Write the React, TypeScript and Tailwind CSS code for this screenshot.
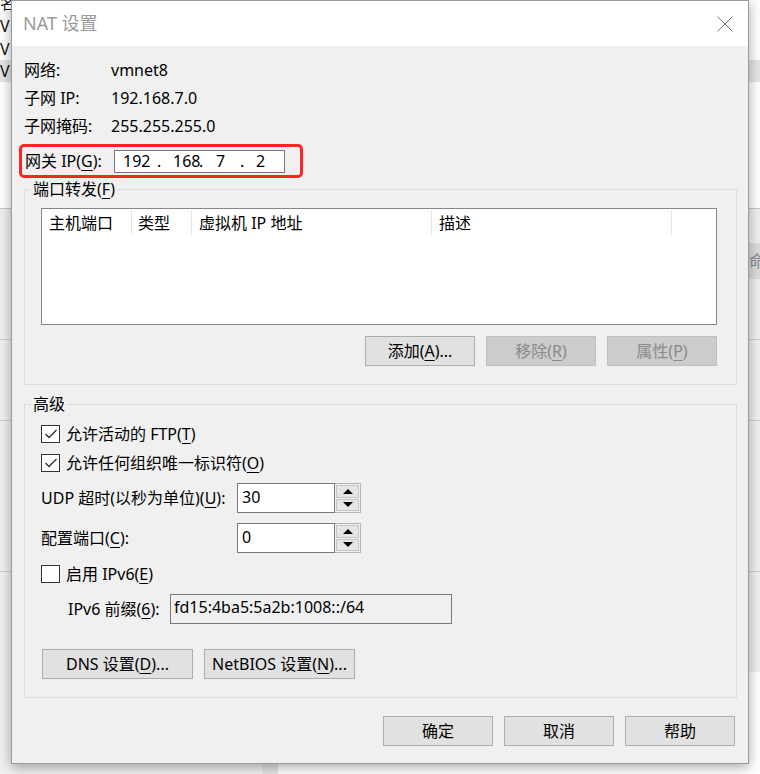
import type { ReactNode } from "react";

function K({ children }: { children: ReactNode }) {
  return <span className="underline decoration-1 underline-offset-[3px]">{children}</span>;
}

function Btn({ children, className = "", disabled }: { children: ReactNode; className?: string; disabled?: boolean }) {
  return (
    <div
      className={
        "flex h-[30px] items-center justify-center border text-[16px] " +
        (disabled ? "border-[#bfbfbf] bg-[#cccccc] text-[#8a8a8a] " : "border-[#adadad] bg-[#e1e1e1] text-black ") +
        className
      }
    >
      {children}
    </div>
  );
}

function Check({ checked, children }: { checked?: boolean; children: ReactNode }) {
  return (
    <div className="flex h-[20px] items-center">
      <div className="flex h-[18px] w-[19px] items-center justify-center border border-[#333] bg-white">
        {checked && (
          <svg width="14" height="14" viewBox="0 0 14 14">
            <polyline points="1.5,7 5,10.5 12.5,3" fill="none" stroke="#333" strokeWidth="1.4" />
          </svg>
        )}
      </div>
      <span className="ml-[6px]">{children}</span>
    </div>
  );
}

function Spin({ value }: { value: string }) {
  return (
    <div className="flex h-[30px]">
      <div className="h-[30px] w-[98px] border border-[#7a7a7a] bg-white px-[4px] pt-[2px] leading-[22px]">{value}</div>
      <div className="flex h-[30px] w-[26px] flex-col gap-[1px] border-y border-r border-[#b4b4b4] bg-[#f0f0f0] p-[1px]">
        <div className="flex flex-1 items-center justify-center border border-[#c6c6c6] bg-[#e5e5e5]">
          <div className="h-0 w-0 border-x-[5px] border-b-[5px] border-x-transparent border-b-black" />
        </div>
        <div className="flex flex-1 items-center justify-center border border-[#c6c6c6] bg-[#e5e5e5]">
          <div className="h-0 w-0 border-x-[5px] border-t-[5px] border-x-transparent border-t-black" />
        </div>
      </div>
    </div>
  );
}

function Group({ title, children, className = "" }: { title: ReactNode; children: ReactNode; className?: string }) {
  return (
    <fieldset className={"ml-[12px] w-[713px] border border-[#dcdcdc] " + className}>
      <legend className="-ml-[10px] px-[2px] text-[16px] leading-[22px]">{title}</legend>
      {children}
    </fieldset>
  );
}

export default function App() {
  return (
    <div className="relative h-[774px] w-[760px] overflow-hidden bg-white font-['Noto_Sans','Noto_Sans_CJK_SC',sans-serif] text-[16px] text-black">
      {/* window behind the dialog */}
      <div className="flex h-full flex-col">
        <div className="-mt-[8px] flex h-[22px] w-[11px] items-center overflow-hidden text-[#222]">名</div>
        <div className="flex h-[24px] items-center">
          <span className="w-[11px] overflow-hidden text-[#111]">V</span>
        </div>
        <div className="flex h-[22px] items-center">
          <span className="w-[11px] overflow-hidden text-[#111]">V</span>
        </div>
        <div className="flex h-[22px] items-center bg-[#e5e5e5]">
          <span className="w-[11px] overflow-hidden text-[#111]">V</span>
        </div>
        <div className="h-[126px] bg-white" />
        <div className="flex flex-1 flex-col border-t border-[#c8c8c8] bg-[#f0f0f0]">
          <div className="mt-[34px] ml-auto flex h-[36px] w-[11px] items-center overflow-hidden bg-[#dddddd] text-[#888]">命</div>
          <div className="mt-[60px] h-px bg-[#cfcfcf]" />
          <div className="mt-[80px] h-px bg-[#cfcfcf]" />
          <div className="mt-[150px] h-px bg-[#cfcfcf]" />
          <div className="mt-[100px] flex flex-1">
            <div className="w-[262px] bg-[#f0f0f0]" />
            <div className="w-[16px] bg-[#e4e4e4]" />
            <div className="flex-1 bg-white" />
          </div>
        </div>
      </div>

      {/* NAT dialog */}
      <div className="absolute left-[11px] top-0 flex h-[764px] w-[738px] flex-col border border-[#9a9a9a] bg-[#f0f0f0] shadow-[0_3px_12px_rgba(0,0,0,0.35)]">
        <div className="flex h-[45px] items-center justify-between bg-white pl-[11px] pr-[15px]">
          <span className="text-[18px] text-[#9c9c9c]">NAT 设置</span>
          <svg width="16" height="16" viewBox="0 0 16 16">
            <path d="M0.5 0.5 L15.5 15.5 M15.5 0.5 L0.5 15.5" stroke="#7a7a7a" strokeWidth="1" />
          </svg>
        </div>

        <div className="flex flex-col pt-[10px]">
          <div className="flex h-[28px] items-center pl-[12px]">
            <span className="w-[87px]">网络:</span>
            <span>vmnet8</span>
          </div>
          <div className="flex h-[28px] items-center pl-[12px]">
            <span className="w-[87px]">子网 IP:</span>
            <span>192.168.7.0</span>
          </div>
          <div className="flex h-[28px] items-center pl-[12px]">
            <span className="w-[87px]">子网掩码:</span>
            <span>255.255.255.0</span>
          </div>

          <div className="mt-[4px] ml-[7px] flex h-[34px] w-[284px] items-center rounded-[5px] border-[3px] border-[#ff2424] pl-[3px]">
            <span className="w-[89px]">
              网关 IP(<K>G</K>):
            </span>
            <div className="flex h-[23px] w-[171px] items-center border border-[#7a7a7a] bg-white pl-[8px]">
              <span className="w-[34px]">192</span>
              <span className="w-[16px]">.</span>
              <span className="w-[26px]">168</span>
              <span className="w-[17px]">.</span>
              <span className="w-[24px]">7</span>
              <span className="w-[16px]">.</span>
              <span>2</span>
            </div>
          </div>

          <Group
            title={
              <>
                端口转发(<K>F</K>)
              </>
            }
            className="pl-[16px] pr-[18px] pt-[8px] pb-[18px]"
          >
            <div className="h-[117px] w-[676px] border border-[#828790] bg-white">
              <div className="flex h-[27px] items-center">
                <div className="flex h-[25px] w-[90px] items-center border-r border-[#e5e5e5] pl-[7px]">主机端口</div>
                <div className="flex h-[25px] w-[60px] items-center border-r border-[#e5e5e5] pl-[6px]">类型</div>
                <div className="flex h-[25px] w-[240px] items-center border-r border-[#e5e5e5] pl-[7px]">虚拟机 IP 地址</div>
                <div className="flex h-[25px] w-[240px] items-center border-r border-[#e5e5e5] pl-[7px]">描述</div>
              </div>
            </div>
            <div className="mt-[11px] flex justify-end gap-[11px] pr-[1px]">
              <Btn className="w-[110px]">
                添加(<K>A</K>)...
              </Btn>
              <Btn className="w-[110px]" disabled>
                移除(<K>R</K>)
              </Btn>
              <Btn className="w-[110px]" disabled>
                属性(<K>P</K>)
              </Btn>
            </div>
          </Group>

          <Group title="高级" className="mt-[8px] pl-[16px] pt-[9px] pb-[18px]">
            <Check checked>
              允许活动的 FTP(<K>T</K>)
            </Check>
            <div className="mt-[9px]">
              <Check checked>
                允许任何组织唯一标识符(<K>O</K>)
              </Check>
            </div>
            <div className="mt-[10px] flex items-center">
              <span className="w-[196px]">
                UDP 超时(以秒为单位)(<K>U</K>):
              </span>
              <Spin value="30" />
            </div>
            <div className="mt-[10px] flex items-center">
              <span className="w-[196px]">
                配置端口(<K>C</K>):
              </span>
              <Spin value="0" />
            </div>
            <div className="mt-[11px]">
              <Check>
                启用 IPv6(<K>E</K>)
              </Check>
            </div>
            <div className="mt-[10px] flex items-center pl-[27px]">
              <span className="w-[102px]">
                IPv6 前缀(<K>6</K>):
              </span>
              <div className="flex h-[30px] w-[282px] border border-[#7a7a7a] bg-[#f0f0f0] px-[3px] pt-[1px] leading-[22px]">
                fd15:4ba5:5a2b:1008::/64
              </div>
            </div>
            <div className="mt-[25px] flex gap-[11px] pl-[1px]">
              <Btn className="w-[151px]">
                DNS 设置(<K>D</K>)...
              </Btn>
              <Btn className="w-[151px]">
                NetBIOS 设置(<K>N</K>)...
              </Btn>
            </div>
          </Group>

          <div className="mt-[18px] flex justify-end gap-[11px] pr-[13px]">
            <Btn className="w-[110px]">确定</Btn>
            <Btn className="w-[110px]">取消</Btn>
            <Btn className="w-[110px]">帮助</Btn>
          </div>
        </div>
      </div>
    </div>
  );
}
